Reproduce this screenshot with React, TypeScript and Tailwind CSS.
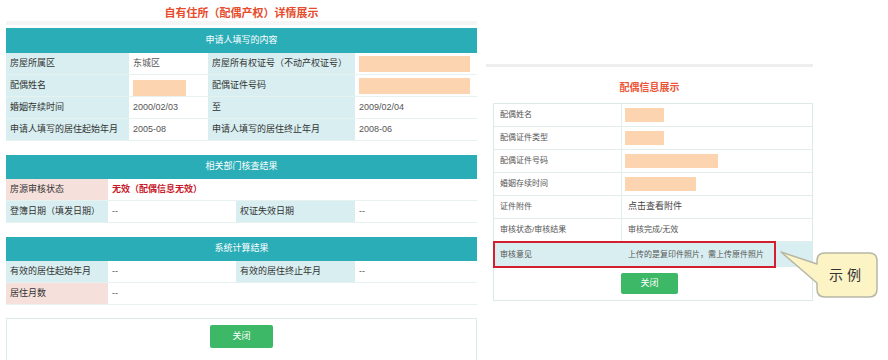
import type { ReactNode } from 'react';

const font = "font-['Liberation_Sans','Noto_Sans_CJK_SC',sans-serif]";

type Kind = 'label' | 'value' | 'pink';

function Cell({ kind, children, className = '' }: { kind: Kind; children?: ReactNode; className?: string }) {
  const bg =
    kind === 'label' ? 'bg-[#d8eef0] text-[#333]' : kind === 'pink' ? 'bg-[#f6e0dc] text-[#333]' : 'bg-white text-[#555]';
  return <div className={`flex items-center pl-[4px] ${bg} ${className}`}>{children}</div>;
}

function Peach({ w, h = 'h-[16px]' }: { w: string; h?: string }) {
  return <div className={`${w} ${h} bg-[#fcd5b0]`} />;
}

function Header({ title }: { title: string }) {
  return (
    <div className="flex h-[24px] items-center justify-center bg-[#2badb8] text-[9px] text-white">{title}</div>
  );
}

function LeftPanel() {
  const row = 'grid h-[22px] border-b border-[#e6f2f0]';
  const cols1 = 'grid-cols-[123px_79px_147px_122px]';
  const cols2 = 'grid-cols-[102px_128px_119px_122px]';
  return (
    <div className="w-[477px] pl-[6px]">
      <div className="flex h-[21px] items-end justify-center pb-[1px] text-[11px] font-bold leading-[14px] text-[#e64c2c]">
        自有住所（配偶产权）详情展示
      </div>
      <div className="h-[4px] bg-[#f5f5f5]" />

      <div className="mt-[3px] text-[9px]">
        <div className="flex h-[25px] items-center justify-center bg-[#2badb8] text-white">申请人填写的内容</div>
        <div className={`${row} ${cols1}`}>
          <Cell kind="label">房屋所属区</Cell>
          <Cell kind="value">东城区</Cell>
          <Cell kind="label">房屋所有权证号（不动产权证号）</Cell>
          <Cell kind="value" className="pl-[2px]">
            <Peach w="w-[111px]" />
          </Cell>
        </div>
        <div className={`${row} ${cols1}`}>
          <Cell kind="label">配偶姓名</Cell>
          <Cell kind="value" className="items-end pl-[2px]">
            <Peach w="w-[53px]" />
          </Cell>
          <Cell kind="label">配偶证件号码</Cell>
          <Cell kind="value" className="pl-[2px]">
            <Peach w="w-[111px]" />
          </Cell>
        </div>
        <div className={`${row} ${cols1}`}>
          <Cell kind="label">婚姻存续时间</Cell>
          <Cell kind="value">2000/02/03</Cell>
          <Cell kind="label">至</Cell>
          <Cell kind="value">2009/02/04</Cell>
        </div>
        <div className={`${row} ${cols1}`}>
          <Cell kind="label">申请人填写的居住起始年月</Cell>
          <Cell kind="value">2005-08</Cell>
          <Cell kind="label">申请人填写的居住终止年月</Cell>
          <Cell kind="value">2008-06</Cell>
        </div>
      </div>

      <div className="mt-[14px] text-[9px]">
        <Header title="相关部门核查结果" />
        <div className={`${row} grid-cols-[102px_369px]`}>
          <Cell kind="pink">房源审核状态</Cell>
          <Cell kind="value" className="font-bold text-[#c8192b]">
            无效（配偶信息无效）
          </Cell>
        </div>
        <div className={`${row} ${cols2}`}>
          <Cell kind="label">登簿日期（填发日期）</Cell>
          <Cell kind="value">--</Cell>
          <Cell kind="label">权证失效日期</Cell>
          <Cell kind="value">--</Cell>
        </div>
      </div>

      <div className="mt-[14px] text-[9px]">
        <Header title="系统计算结果" />
        <div className={`${row} ${cols2}`}>
          <Cell kind="label">有效的居住起始年月</Cell>
          <Cell kind="value">--</Cell>
          <Cell kind="label">有效的居住终止年月</Cell>
          <Cell kind="value">--</Cell>
        </div>
        <div className={`${row} grid-cols-[102px_369px] border-[#d6ebe6]`}>
          <Cell kind="pink">居住月数</Cell>
          <Cell kind="value">--</Cell>
        </div>
      </div>

      <div className="mt-[13px] flex h-[50px] justify-center border border-[#dcece7] pt-[6px]">
        <button className="flex h-[23px] w-[63px] items-center justify-center rounded-[2px] bg-[#3db867] text-[9px] text-white">
          关闭
        </button>
      </div>
    </div>
  );
}

function RightPanel() {
  const rows: [string, ReactNode][] = [
    ['配偶姓名', <Peach w="w-[39px]" h="h-[14px]" />],
    ['配偶证件类型', <Peach w="w-[39px]" h="h-[14px]" />],
    ['配偶证件号码', <Peach w="w-[93px]" h="h-[14px]" />],
    ['婚姻存续时间', <Peach w="w-[71px]" h="h-[14px]" />],
    ['证件附件', <span className="ml-[3px] text-[9px] text-[#444]">点击查看附件</span>],
    ['审核状态/审核结果', <span className="ml-[3px] text-[#555]">审核完成/无效</span>],
  ];
  return (
    <div className="ml-[9px] w-[327px] pt-[64px]">
      <div className="h-[3px] bg-[#eeeeee]" />
      <div className="flex h-[36px] justify-center pt-[14px] text-[10px] font-bold leading-[14px] text-[#ec5437]">
        配偶信息展示
      </div>
      <div className="ml-[7px] w-[320px] border border-[#dcebe7] text-[8px]">
        {rows.map(([label, value]) => (
          <div key={label} className="grid h-[23px] grid-cols-[128px_191px] border-b border-[#e2eeeb]">
            <div className="flex items-center border-r border-[#e2eeeb] pl-[6px] text-[#555]">{label}</div>
            <div className="flex items-center pl-[3px]">{value}</div>
          </div>
        ))}
        <div className="relative grid h-[25px] grid-cols-[128px_191px] bg-[#d9eef0]">
          <div className="flex items-center pl-[6px] text-[#555]">审核意见</div>
          <div className="flex items-center pl-[6px] text-[#555]">上传的是复印件照片，需上传原件照片</div>
          <div className="absolute -left-[1px] -top-[1px] h-[27px] w-[283px] border-2 border-[#d3202e]" />
        </div>
        <div className="flex h-[33px] pl-[127px] pt-[6px]">
          <button className="flex h-[21px] w-[57px] items-center justify-center rounded-[2px] bg-[#3db867] text-[9px] text-white">
            关闭
          </button>
        </div>
      </div>
    </div>
  );
}

function Callout() {
  return (
    <div className="absolute left-[778px] top-[248px] h-[52px] w-[102px]">
      <svg width="102" height="52" viewBox="0 0 102 52" className="absolute left-0 top-0">
        <path
          d="M47 5 H91 Q99 5 99 13 V41 Q99 49 91 49 H47 Q39 49 39 41 V35 L3 4 L39 16 V13 Q39 5 47 5 Z"
          fill="#fdf4c6"
          stroke="#b8b7a6"
          strokeWidth="1.5"
          strokeLinejoin="round"
        />
      </svg>
      <span className="absolute left-[39px] top-[5px] flex h-[44px] w-[60px] items-center justify-center text-[14px] tracking-[4px] text-[#333]">
        示例
      </span>
    </div>
  );
}

export default function App() {
  return (
    <div className={`relative flex h-[360px] w-[888px] overflow-hidden bg-white ${font}`}>
      <LeftPanel />
      <RightPanel />
      <Callout />
    </div>
  );
}
